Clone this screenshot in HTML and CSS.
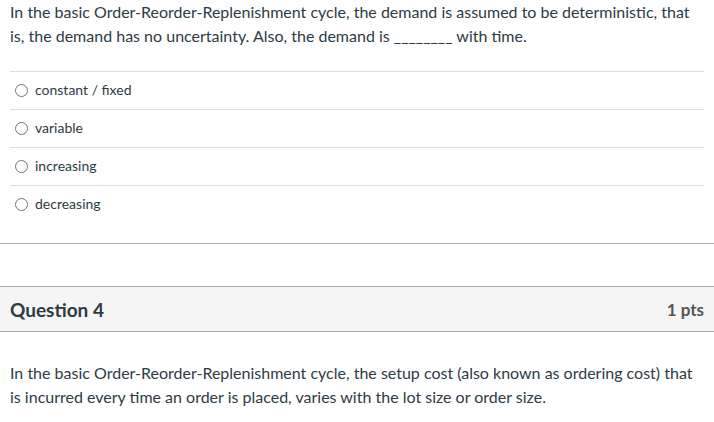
FILE: index.html
```html
<!DOCTYPE html>
<html>
<head>
<meta charset="utf-8">
<link rel="stylesheet" href="styles.css">
</head>
<body>
<div class="page">
  <div class="question-body">
    <p class="question-text">In the basic Order-Reorder-Replenishment cycle, the demand is assumed to be deterministic, that is, the demand has no uncertainty. Also, the demand is ________ with time.</p>
    <div class="answers">
      <label class="answer"><span class="radio"></span><span class="answer-label">constant / fixed</span></label>
      <label class="answer"><span class="radio"></span><span class="answer-label">variable</span></label>
      <label class="answer"><span class="radio"></span><span class="answer-label">increasing</span></label>
      <label class="answer"><span class="radio"></span><span class="answer-label">decreasing</span></label>
    </div>
  </div>
  <div class="divider"></div>
  <div class="question">
    <div class="question-header">
      <span class="question-name">Question 4</span>
      <span class="question-points">1 pts</span>
    </div>
    <p class="question-text second">In the basic Order-Reorder-Replenishment cycle, the setup cost (also known as ordering cost) that is incurred every time an order is placed, varies with the lot size or order size.</p>
  </div>
</div>
</body>
</html>
```

FILE: styles.css
```css
html, body {
  margin: 0;
  padding: 0;
  background: #ffffff;
}
body {
  font-family: Lato, "Open Sans", sans-serif;
  color: #2d3b45;
}
.page {
  width: 714px;
}
.question-body {
  padding: 0 10px;
}
.question-text {
  margin: 0;
  font-size: 16px;
  line-height: 24px;
  padding-top: 0;
}
.answers {
  margin-top: 23px;
  border-top: 1px solid #dcdfe1;
}
.answer {
  display: flex;
  align-items: center;
  height: 37px;
  border-bottom: 1px solid #dcdfe1;
  padding-left: 5px;
  font-size: 14px;
}
.answer:last-child {
  border-bottom: none;
}
.answer-label {
  padding-bottom: 2px;
}
.radio {
  width: 11px;
  height: 11px;
  border: 1px solid #6b7780;
  border-radius: 50%;
  margin-right: 7px;
  flex: none;
}
.divider {
  margin-top: 20px;
  border-top: 1px solid #a5afb5;
}
.question {
  margin-top: 42px;
}
.question-header {
  display: flex;
  justify-content: space-between;
  align-items: center;
  height: 44px;
  padding: 0 10px;
  background: #f5f5f5;
  border-top: 1px solid #a5afb5;
  border-bottom: 1px solid #a5afb5;
}
.question-name {
  font-size: 19px;
  font-weight: 700;
}
.question-points {
  font-size: 17px;
  font-weight: 700;
  color: #555555;
}
.second {
  padding: 29px 10px 0;
}
```
